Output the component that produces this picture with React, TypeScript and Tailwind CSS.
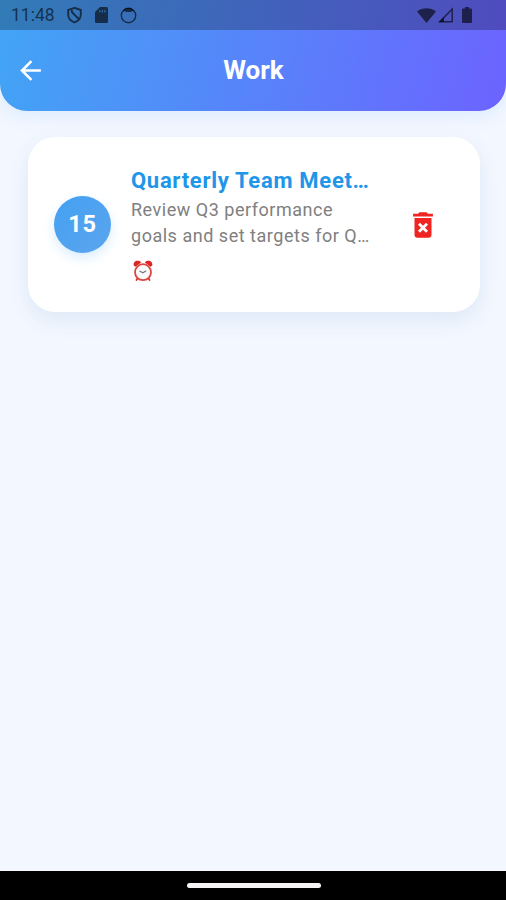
import React from 'react';
import { MdArrowBack, MdDeleteForever } from 'react-icons/md';

interface Task {
  id: number;
  day: string;
  title: string;
  lines: string[];
}

const tasks: Task[] = [
  {
    id: 1,
    day: '15',
    title: 'Quarterly Team Meet…',
    lines: ['Review Q3 performance', 'goals and set targets for Q…'],
  },
];

function StatusBar() {
  return (
    <div className="flex h-[30px] items-center justify-between bg-black/25 pl-[11px] pr-[34px] text-black/60">
      <div className="flex items-center">
        <span className="w-[43px] whitespace-nowrap text-[17.5px] leading-[31px]">11:48</span>
        <svg className="ml-[12px] h-[18px] w-[17px]" viewBox="0 0 17 18" fill="none" stroke="currentColor" strokeWidth="1.9">
          <path d="M8.500 1.800 2.200 4v4.500c0 3.600 2.500 6.500 6.300 7.900 3.800-1.400 6.300-4.300 6.300-7.900V4ZM5.500 3l.700 3.500 6.600 6.500" />
        </svg>
        <svg className="ml-[12px] h-[16px] w-[13px]" viewBox="0 0 13 16" fill="currentColor">
          <path fillRule="evenodd" d="M5 0h6.500A1.500 1.500 0 0 1 13 1.500v13a1.500 1.500 0 0 1-1.500 1.500h-10A1.500 1.500 0 0 1 0 14.500V5ZM4.400 3v2.600h1V3Zm2.500 0v2.600h1V3Zm2.500 0v2.600h1V3Z" />
        </svg>
        <svg className="ml-[12px] h-[17px] w-[17px]" viewBox="0 0 17 17">
          <circle cx="8.500" cy="8.500" r="7.200" fill="none" stroke="currentColor" strokeWidth="1.400" />
          <path fill="currentColor" d="M3.500 3C5 1.600 6.500 1 8.500 1s3.500.600 5 2l.300 1.500-1.800-.400-.800 1H5.800L5 4.100l-1.800.400Z" />
        </svg>
      </div>
      <div className="flex items-center">
        <svg className="h-[15px] w-[19px]" viewBox="0 0 19 15" fill="currentColor">
          <path d="M0 3.500C5.500-.8 13.500-.8 19 3.500L9.500 15Z" />
        </svg>
        <svg className="ml-[2px] h-[16px] w-[16px]" viewBox="0 0 16 16">
          <path fill="none" stroke="currentColor" strokeWidth="1.500" d="M14.200 2v12.800H1.800Z" />
          <path fill="currentColor" d="M6 10v5H.800Z" />
        </svg>
        <svg className="ml-[8px] h-[16px] w-[10px]" viewBox="0 0 10 16" fill="currentColor">
          <path d="M3 0h4v1.500h2A1 1 0 0 1 10 2.500V15a1 1 0 0 1-1 1H1a1 1 0 0 1-1-1V2.500a1 1 0 0 1 1-1h2Z" />
        </svg>
      </div>
    </div>
  );
}

function AlarmClock() {
  return (
    <svg className="h-[22px] w-[20px]" viewBox="0 0 20 22" fill="none">
      <path stroke="#d9302c" strokeWidth="1.800" strokeLinecap="round" d="m4.500 18.500-1 1.500M15.500 18.500l1 1.500" />
      <path fill="#dc2626" d="M.700 5.600C.300 2.800 2 .800 4.500.800c1.700 0 3 .600 3.700 1.700L2.500 6.700ZM19.300 5.600c.400-2.800-1.300-4.800-3.800-4.800-1.700 0-3 .600-3.700 1.700l5.700 4.200Z" />
      <circle cx="10" cy="12.200" r="8" fill="#fafafa" stroke="#dc4440" strokeWidth="1.800" />
      <path stroke="#777" strokeWidth="1.100" strokeLinecap="round" d="m6.800 11.200 3.200 1.600 2.800-1.800" />
    </svg>
  );
}

function TaskCard({ task }: { task: Task }) {
  return (
    <div className="flex h-[175px] items-center rounded-[27px] bg-white pl-[26px] shadow-[0_8px_20px_rgba(66,135,180,0.12)]">
      <div className="flex size-[57px] shrink-0 items-center justify-center rounded-full bg-linear-to-br from-[#42a0f2] to-[#5ba5ee] text-[23.5px] font-bold tracking-[0.8px] text-white shadow-[0_5px_12px_rgba(66,165,245,0.2)]">
        {task.day}
      </div>
      <div className="ml-[20px] w-[260px] whitespace-nowrap">
        <h2 className="text-[22px] font-bold leading-[28px] tracking-[0.7px] text-[#2196e8]">
          {task.title}
        </h2>
        <div className="mt-[2px] text-[18px] leading-[26px] tracking-[0.52px] text-[#808080]">
          {task.lines.map((line) => (
            <p key={line}>{line}</p>
          ))}
        </div>
        <div className="ml-[2px] mt-[11px]">
          <AlarmClock />
        </div>
      </div>
      <button className="ml-[9px] flex size-[46px] items-center justify-center text-[#f02420]" aria-label="Delete">
        <MdDeleteForever size={34} />
      </button>
    </div>
  );
}

export default function App() {
  return (
    <div className="flex h-[900px] w-[506px] flex-col overflow-hidden bg-[#f3f7ff] font-[Roboto,sans-serif]">
      <header className="h-[111px] shrink-0 overflow-hidden rounded-b-[27px] bg-[linear-gradient(102.4deg,#42a5f5,#6c63ff)] shadow-[0_5px_18px_rgba(66,165,245,0.13)]">
        <StatusBar />
        <div className="grid h-[81px] grid-cols-[60px_1fr_60px] items-center text-white">
          <button className="pl-[15px]" aria-label="Back">
            <MdArrowBack size={31} />
          </button>
          <h1 className="pl-[1px] text-center text-[26px] font-bold">Work</h1>
        </div>
      </header>
      <main className="flex-1 pl-[28px] pr-[26px] pt-[26px]">
        {tasks.map((task) => (
          <TaskCard key={task.id} task={task} />
        ))}
      </main>
      <footer className="flex h-[29px] shrink-0 items-center justify-center bg-black pl-[1px]">
        <div className="h-[5px] w-[134px] rounded-full bg-[#f5f3f3]" />
      </footer>
    </div>
  );
}
